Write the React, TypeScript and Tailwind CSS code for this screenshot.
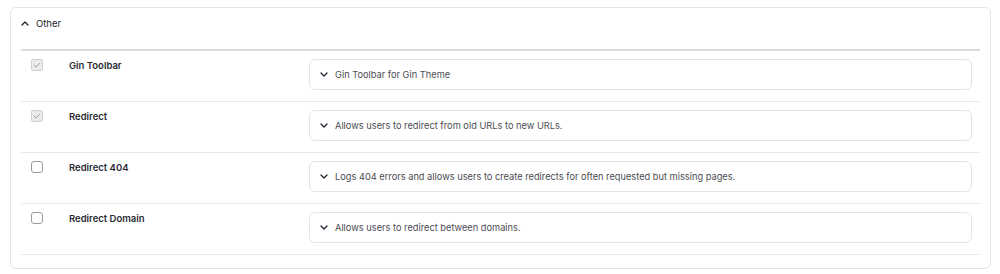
type Module = {
    name: string;
    description: string;
    enabled: boolean;
};

const modules: Module[] = [
    { name: "Gin Toolbar", description: "Gin Toolbar for Gin Theme", enabled: true },
    { name: "Redirect", description: "Allows users to redirect from old URLs to new URLs.", enabled: true },
    {
        name: "Redirect 404",
        description: "Logs 404 errors and allows users to create redirects for often requested but missing pages.",
        enabled: false,
    },
    { name: "Redirect Domain", description: "Allows users to redirect between domains.", enabled: false },
];

const Chevron = ({ up = false }: { up?: boolean }) => (
    <svg width="8" height="5" viewBox="0 0 8 5" fill="none" className="shrink-0">
        <path
            d={up ? "M1 4 4 1 7 4" : "M1 1 4 4 7 1"}
            stroke="#222330"
            strokeWidth="1.3"
            strokeLinecap="round"
            strokeLinejoin="round"
        />
    </svg>
);

const Checkbox = ({ checked }: { checked: boolean }) =>
    checked ? (
        // installed modules: disabled + checked
        <span className="flex h-3 w-3 items-center justify-center rounded-[2px] border border-[#d0d0d0] bg-[#ececec]">
            <svg viewBox="0 0 12 12" className="h-2.5 w-2.5" fill="none">
                <path d="M2.5 6.3 4.8 8.5 9.5 3.6" stroke="#a3a3a3" strokeWidth="1.2" strokeLinecap="round" strokeLinejoin="round" />
            </svg>
        </span>
    ) : (
        <span className="block h-3 w-3 rounded-[3px] border border-[#9a9a9a] bg-white" />
    );

export default function App() {
    return (
        <div className="min-h-[274px] bg-white pt-[7px] pl-[10px] pr-[9px] font-['Inter','Liberation_Sans',sans-serif] text-[#222330]">
            <div className="rounded-md border border-[#e4e4e4] px-[10px] pb-[13px]">
                {/* Details summary */}
                <div className="flex h-[41px] items-start gap-[7px] pt-[10px] text-[9.5px] leading-[12px] text-[#222330]">
                    <span className="pt-[3px]">
                        <Chevron up />
                    </span>
                    <span>Other</span>
                </div>

                <div className="border-t-2 border-[#dcdcdc]">
                    {modules.map(m => (
                        <div key={m.name} className="flex h-[51px] border-b border-[#e8e8e8] pt-[8px]">
                            <div className="w-[48px] pl-[10px]">
                                <Checkbox checked={m.enabled} />
                            </div>
                            <div className="w-[240px] pt-[2px] text-[9.5px] font-semibold leading-[10px] text-[#2a2b33]">
                                {m.name}
                            </div>
                            <div className="flex-1 pr-[8px]">
                                <div className="flex h-[31px] items-center gap-[7px] rounded-md border border-[#e4e4e4] pl-[10px] text-[9.25px] text-[#4a4b52]">
                                    <Chevron />
                                    <span>{m.description}</span>
                                </div>
                            </div>
                        </div>
                    ))}
                </div>
            </div>
        </div>
    );
}
